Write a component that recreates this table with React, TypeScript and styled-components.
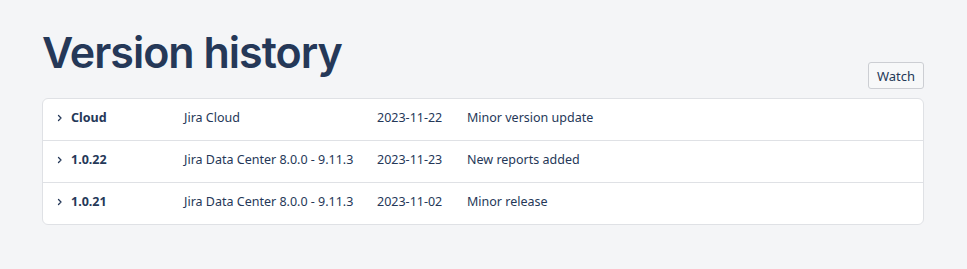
import styled, { createGlobalStyle } from 'styled-components';

const versions = [
  { name: 'Cloud', product: 'Jira Cloud', date: '2023-11-22', summary: 'Minor version update' },
  { name: '1.0.22', product: 'Jira Data Center 8.0.0 - 9.11.3', date: '2023-11-23', summary: 'New reports added' },
  { name: '1.0.21', product: 'Jira Data Center 8.0.0 - 9.11.3', date: '2023-11-02', summary: 'Minor release' },
];

function Chevron() {
  return (
    <svg width="8" height="8" viewBox="0 0 8 8" fill="none">
      <path d="M2.5 1.5 5 4 2.5 6.5" stroke="#253858" strokeWidth="1.3" strokeLinecap="round" strokeLinejoin="round" />
    </svg>
  );
}

function App() {
  return (
    <>
      <GlobalStyle />
      <Page>
        <Title>Version history</Title>
        <Toolbar>
          <WatchButton type="button">Watch</WatchButton>
        </Toolbar>
        <Table>
          {versions.map((v) => (
            <Row key={v.name}>
              <Toggle>
                <Chevron />
              </Toggle>
              <Name>{v.name}</Name>
              <Cell>{v.product}</Cell>
              <Cell>{v.date}</Cell>
              <Cell>{v.summary}</Cell>
            </Row>
          ))}
        </Table>
      </Page>
    </>
  );
}

const GlobalStyle = createGlobalStyle`
  html, body {
    margin: 0;
    background: #f4f5f7;
    font-family: 'Noto Sans', 'Open Sans', sans-serif;
    color: #253858;
  }
`;

const Page = styled.main`
  padding: 22px 43px 0 42px;
`;

const Title = styled.h1`
  margin: 0;
  font-family: Inter, 'Noto Sans', sans-serif;
  font-size: 43px;
  font-weight: 600;
  letter-spacing: -1px;
  line-height: 60px;
  color: #253858;
`;

const Toolbar = styled.div`
  display: flex;
  justify-content: flex-end;
  margin-top: -20px;
  margin-bottom: 9px;
`;

const WatchButton = styled.button`
  height: 27px;
  padding: 0 8px;
  border: 1px solid #ccced3;
  border-radius: 3px;
  background: #f7f8f9;
  font-family: 'Noto Sans', sans-serif;
  font-size: 13px;
  color: #253858;
`;

const Table = styled.div`
  background: #fff;
  border: 1px solid #dfe1e5;
  border-radius: 6px;
  overflow: hidden;
`;

const Row = styled.div`
  display: grid;
  grid-template-columns: 15px 113px 193px 90px 1fr;
  align-items: center;
  height: 41px;
  padding: 0 0 4px 13px;
  box-sizing: border-box;
  font-size: 12.5px;
  & + & {
    border-top: 1px solid #dfe1e5;
    height: 42px;
  }
`;

const Toggle = styled.span`
  display: flex;
  align-items: center;
`;

const Name = styled.span`
  font-weight: 700;
`;

const Cell = styled.span`
  white-space: nowrap;
`;

export default App;
